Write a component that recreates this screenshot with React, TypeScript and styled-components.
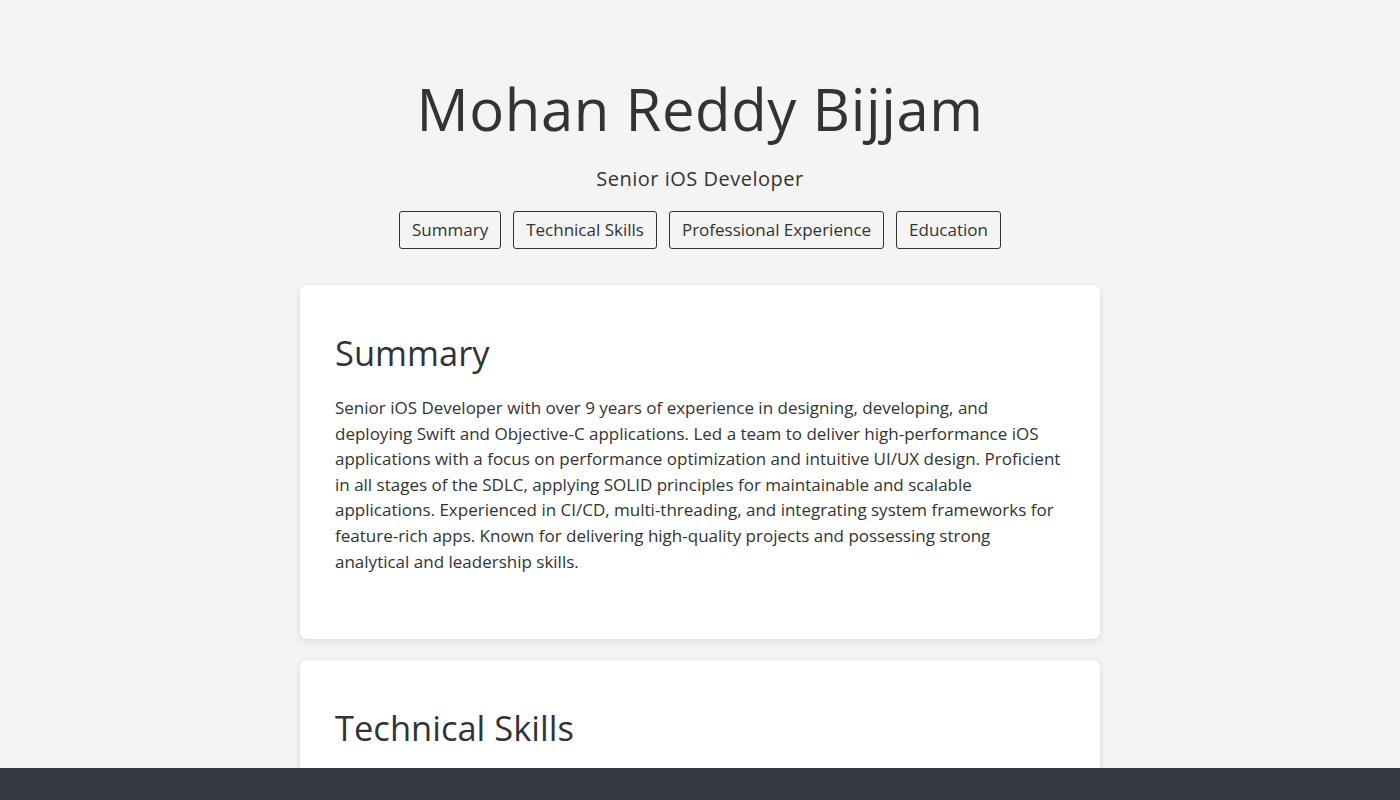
import styled, { createGlobalStyle } from 'styled-components';

const GlobalStyle = createGlobalStyle`
  html, body {
    margin: 0;
    padding: 0;
    background-color: #f4f4f4;
    color: #333;
    font-family: 'Open Sans', 'Noto Sans', sans-serif;
  }
`;

const sections = ['Summary', 'Technical Skills', 'Professional Experience', 'Education'];

const summaryText =
  'Senior iOS Developer with over 9 years of experience in designing, developing, and deploying Swift and Objective-C applications. Led a team to deliver high-performance iOS applications with a focus on performance optimization and intuitive UI/UX design. Proficient in all stages of the SDLC, applying SOLID principles for maintainable and scalable applications. Experienced in CI/CD, multi-threading, and integrating system frameworks for feature-rich apps. Known for delivering high-quality projects and possessing strong analytical and leadership skills.';

function App() {
  return (
    <>
      <GlobalStyle />
      <Page>
        <Header>
          <Name>Mohan Reddy Bijjam</Name>
          <Role>Senior iOS Developer</Role>
          <Nav>
            {sections.map((s) => (
              <NavButton key={s} href={`#${s.toLowerCase().replace(/ /g, '-')}`}>
                {s}
              </NavButton>
            ))}
          </Nav>
        </Header>
        <Main>
          <Card id="summary">
            <CardTitle>Summary</CardTitle>
            <CardText>{summaryText}</CardText>
          </Card>
          <Card id="technical-skills">
            <CardTitle>Technical Skills</CardTitle>
          </Card>
        </Main>
      </Page>
      <Footer />
    </>
  );
}

const Page = styled.div`
  min-height: 100vh;
  padding-bottom: 60px;
  box-sizing: border-box;
`;

const Header = styled.header`
  display: flex;
  flex-direction: column;
  align-items: center;
  padding-top: 74px;
`;

const Name = styled.h1`
  margin: 0;
  font-size: 58px;
  font-weight: 400;
  line-height: 1.2;
  letter-spacing: 0.6px;
`;

const Role = styled.p`
  margin: 21px 0 0;
  font-size: 20px;
  line-height: 1.4;
  letter-spacing: 0.5px;
`;

const Nav = styled.nav`
  display: flex;
  gap: 12px;
  margin-top: 18px;
`;

const NavButton = styled.a`
  display: inline-flex;
  align-items: center;
  height: 38px;
  box-sizing: border-box;
  padding: 0 12px;
  border: 1px solid #333;
  border-radius: 3px;
  color: #333;
  text-decoration: none;
  font-size: 17px;
`;

const Main = styled.main`
  display: flex;
  flex-direction: column;
  align-items: center;
  gap: 21px;
  margin-top: 36px;
`;

const Card = styled.section`
  width: 800px;
  min-height: 160px;
  box-sizing: border-box;
  padding: 32px 35px 65px;
  background: #fff;
  border-radius: 8px;
  box-shadow: 0 2px 8px rgba(0, 0, 0, 0.1);
`;

const CardTitle = styled.h2`
  margin: 15px 0 0;
  font-size: 34.5px;
  font-weight: 400;
  line-height: 1.2;
`;

const CardText = styled.p`
  margin: 22px 0 0;
  font-size: 17px;
  line-height: 25.6px;
`;

const Footer = styled.footer`
  position: fixed;
  left: 0;
  right: 0;
  bottom: 0;
  height: 32px;
  background-color: #363a41;
`;

export default App;
